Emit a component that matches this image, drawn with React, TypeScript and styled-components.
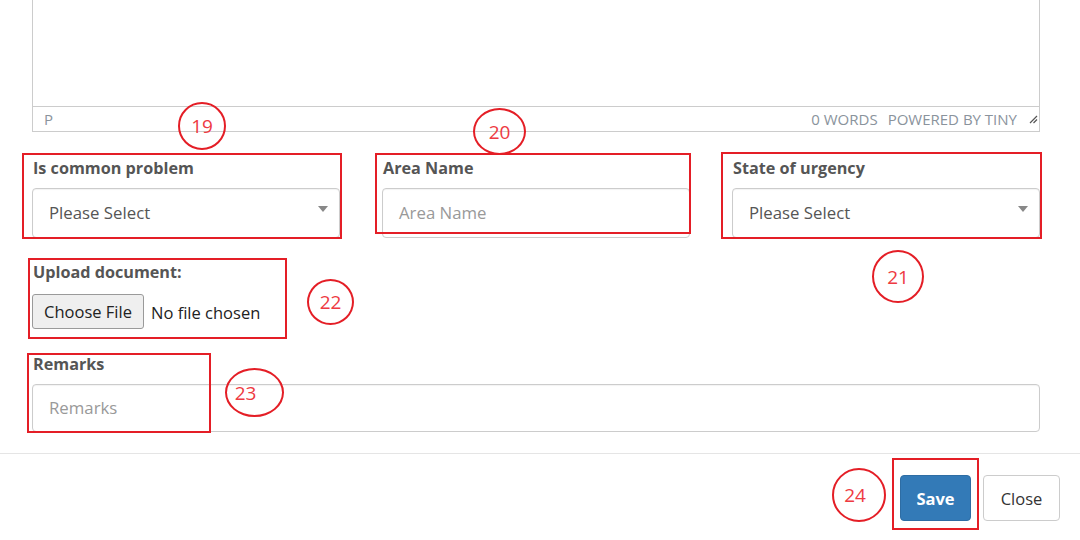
import React from "react";
import styled, { createGlobalStyle } from "styled-components";

const Global = createGlobalStyle`
  html, body { margin: 0; padding: 0; background: #fff; }
  body { font-family: "Open Sans", "Liberation Sans", sans-serif; overflow: hidden; }
  * { box-sizing: border-box; }
`;

const RED = "#e41e26";

const Page = styled.div`
  position: relative;
  width: 1080px;
  height: 540px;
  overflow: hidden;
`;

const Editor = styled.div`
  margin: 0 40px 0 32px;
  border-left: 1px solid #ccc;
  border-right: 1px solid #ccc;
  border-bottom: 1px solid #ccc;
`;

const EditArea = styled.div`
  height: 106px;
`;

const StatusBar = styled.div`
  height: 25px;
  border-top: 1px solid #ccc;
  display: flex;
  align-items: center;
  padding: 0 1px 0 11px;
  font-size: 15px;
  color: #8a939c;
`;

const Path = styled.span`
  flex: 1;
`;

const WordCount = styled.span`
  margin-right: 10px;
`;

const Branding = styled.span`
  margin-right: 12px;
`;

const Form = styled.div`
  padding: 25px 40px 0 32px;
  display: flex;
  flex-direction: column;
`;

const Grid = styled.div`
  display: grid;
  grid-template-columns: repeat(3, 308px);
  column-gap: 42px;
`;

const Field = styled.div<{ $mt?: number }>`
  display: flex;
  flex-direction: column;
  margin-top: ${(p) => p.$mt ?? 0}px;
`;

const Label = styled.label<{ $mb?: number }>`
  font-weight: 700;
  font-size: 16.2px;
  line-height: 22px;
  color: #555;
  margin-bottom: ${(p) => p.$mb ?? 9}px;
  padding-left: 1px;
`;

const Control = styled.div<{ $h?: number }>`
  height: ${(p) => p.$h ?? 50}px;
  border: 1px solid #ccc;
  border-radius: 4px;
  display: flex;
  align-items: center;
  padding: 0 11px 2px 16px;
  font-size: 16.8px;
  box-shadow: inset 0 1px 1px rgba(0, 0, 0, 0.05);
`;

const Value = styled.span`
  flex: 1;
  color: #555;
`;

const Placeholder = styled.span`
  flex: 1;
  color: #999;
`;

const Caret = styled.span`
  width: 0;
  height: 0;
  border-left: 5px solid transparent;
  border-right: 5px solid transparent;
  border-top: 6px solid #888;
  margin-top: -6px;
`;

const FileRow = styled.div`
  display: flex;
  align-items: center;
  gap: 7px;
`;

const FileButton = styled.button`
  width: 112px;
  height: 35px;
  border: 1px solid #9a9a9a;
  border-radius: 3px;
  background: #efefef;
  font-family: "Open Sans", "Liberation Sans", sans-serif;
  font-size: 16.5px;
  color: #222;
  padding: 0;
`;

const FileText = styled.span`
  font-size: 16.5px;
  color: #222;
  margin-top: 2px;
`;

const Footer = styled.div`
  margin-top: 21px;
  border-top: 1px solid #e5e5e5;
  display: flex;
  justify-content: flex-end;
  gap: 12px;
  padding: 21px 20px 0 0;
`;

const Btn = styled.button<{ $primary?: boolean; $w: number }>`
  width: ${(p) => p.$w}px;
  height: 46px;
  border-radius: 4px;
  font-family: "Open Sans", "Liberation Sans", sans-serif;
  font-size: 16.5px;
  padding: 0;
  border: 1px solid ${(p) => (p.$primary ? "#2e6da4" : "#ccc")};
  background: ${(p) => (p.$primary ? "#337ab7" : "#fff")};
  color: ${(p) => (p.$primary ? "#fff" : "#333")};
  font-weight: ${(p) => (p.$primary ? 700 : 400)};
`;

const Box = styled.div`
  position: absolute;
  border: 2px solid ${RED};
  pointer-events: none;
`;

const Badge = styled.div<{ $dx?: number; $dy?: number }>`
  position: absolute;
  border: 2px solid ${RED};
  border-radius: 50%;
  display: flex;
  align-items: center;
  justify-content: center;
  color: #ee3a42;
  font-size: 19px;
  font-family: "Open Sans", "Liberation Sans", sans-serif;
  padding: ${(p) => `${p.$dy ?? 0}px ${p.$dx ?? 0}px 0 0`};
`;

const Resize = () => (
  <svg width="9" height="9" viewBox="0 0 9 9">
    <path d="M8 1 L1 8 M8 4.5 L4.5 8" stroke="#555" strokeWidth="1.2" fill="none" />
  </svg>
);

type Rect = [number, number, number, number];

const boxes: Rect[] = [
  [22, 153, 320, 86],
  [375, 153, 316, 81],
  [721, 152, 321, 87],
  [28, 258, 259, 81],
  [27, 353, 184, 80],
  [892, 458, 87, 72],
];

const badges: { n: string; r: Rect; dx?: number; dy?: number }[] = [
  { n: "19", r: [178, 102, 48, 48] },
  { n: "20", r: [473, 108, 53, 47] },
  { n: "21", r: [872, 250, 52, 53] },
  { n: "22", r: [307, 279, 47, 46] },
  { n: "23", r: [225, 368, 59, 49], dx: 18, dy: 0 },
  { n: "24", r: [832, 468, 54, 54], dx: 8, dy: 0 },
];

export default function App() {
  return (
    <Page>
      <Global />
      <Editor>
        <EditArea />
        <StatusBar>
          <Path>P</Path>
          <WordCount>0 WORDS</WordCount>
          <Branding>POWERED BY TINY</Branding>
          <Resize />
        </StatusBar>
      </Editor>
      <Form>
        <Grid>
          <Field>
            <Label>Is common problem</Label>
            <Control>
              <Value>Please Select</Value>
              <Caret />
            </Control>
          </Field>
          <Field>
            <Label>Area Name</Label>
            <Control>
              <Placeholder>Area Name</Placeholder>
            </Control>
          </Field>
          <Field>
            <Label>State of urgency</Label>
            <Control>
              <Value>Please Select</Value>
              <Caret />
            </Control>
          </Field>
        </Grid>
        <Field $mt={23}>
          <Label $mb={11}>Upload document:</Label>
          <FileRow>
            <FileButton>Choose File</FileButton>
            <FileText>No file chosen</FileText>
          </FileRow>
        </Field>
        <Field $mt={24}>
          <Label>Remarks</Label>
          <Control $h={48}>
            <Placeholder>Remarks</Placeholder>
          </Control>
        </Field>
      </Form>
      <Footer>
        <Btn $primary $w={71}>Save</Btn>
        <Btn $w={77}>Close</Btn>
      </Footer>
      {boxes.map((b, i) => (
        <Box key={i} style={{ left: b[0], top: b[1], width: b[2], height: b[3] }} />
      ))}
      {badges.map((b) => (
        <Badge
          key={b.n}
          $dx={b.dx}
          $dy={b.dy}
          style={{ left: b.r[0], top: b.r[1], width: b.r[2], height: b.r[3] }}
        >
          {b.n}
        </Badge>
      ))}
    </Page>
  );
}
